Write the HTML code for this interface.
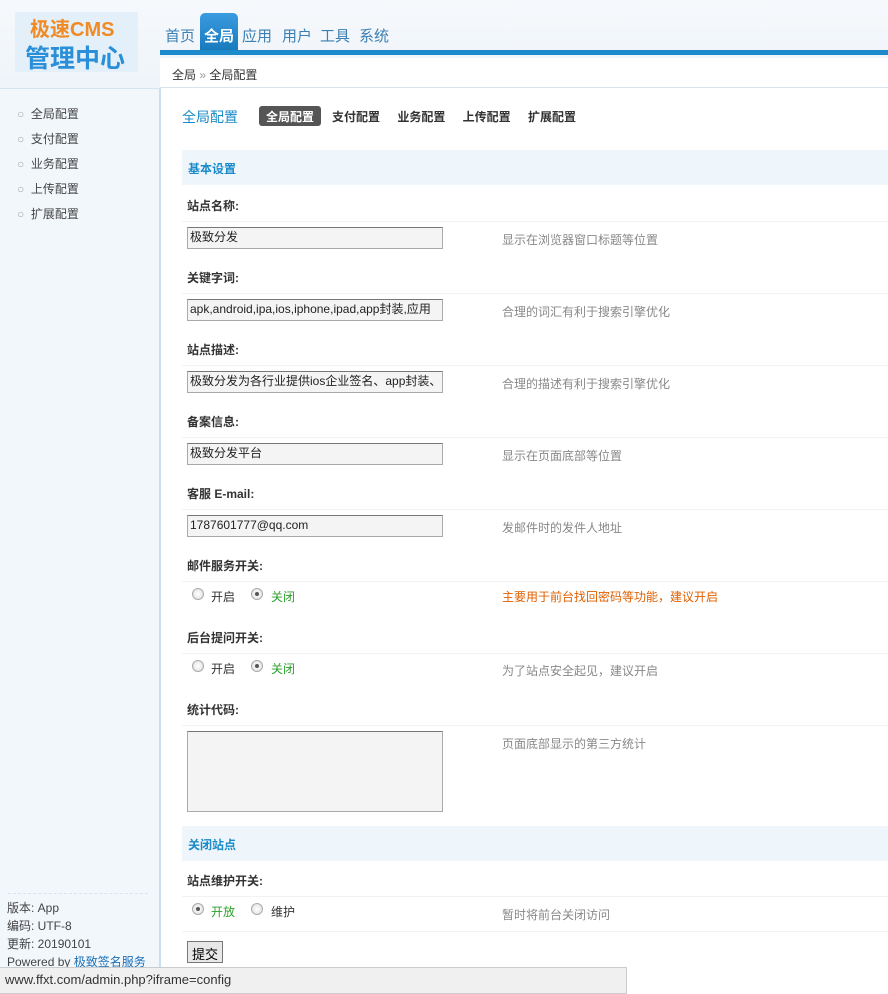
<!DOCTYPE html><html><head><meta charset="utf-8"><style>
*{margin:0;padding:0;box-sizing:border-box}
body{width:888px;height:994px;overflow:hidden;background:#fff;font-family:"Liberation Sans","Noto Sans CJK SC",sans-serif;font-size:12px;color:#333;position:relative}
.a{position:absolute;white-space:nowrap}
.lbl{font-weight:bold;font-size:12px;color:#333}
.hint{color:#888;font-size:12px}
.inp{position:absolute;left:187px;width:256px;height:22px;border:1px solid #aaa;border-top-color:#777;background:#f4f4f4;font-size:12px;line-height:14px;padding:2px 2px;overflow:hidden;white-space:nowrap;color:#222}
.line{position:absolute;left:182px;right:0;height:1px;background:#f0f2f4}
.rad{position:absolute;width:12px;height:12px;border-radius:50%;border:1px solid #aaa;background:radial-gradient(#fff,#ddd)}
.rad.on::after{content:"";position:absolute;left:3px;top:3px;width:4px;height:4px;border-radius:50%;background:#555}
.sec{position:absolute;left:182px;right:0;height:35px;background:#eef5fb;color:#1a8bc8;font-weight:bold;padding:10px 6px;font-size:12px}
.nv{position:absolute;top:25px;font-size:15px;color:#3b7fb3}
</style></head><body>
<div class="a" style="left:0;top:0;width:888px;height:88px;background:linear-gradient(#f6f9fc,#eef4f9)"></div>
<div class="a" style="left:15px;top:12px;width:123px;height:60px;background:#e4f0f9"></div>
<div class="a" style="left:30px;top:13px;font-size:20px;font-weight:bold;color:#f08a24">极速CMS</div>
<div class="a" style="left:25px;top:39px;font-size:25px;font-weight:bold;color:#2a8fd8">管理中心</div>
<div class="a" style="left:200px;top:13px;width:38px;height:40px;background:linear-gradient(#3a9be0,#1677bb);border-radius:5px 5px 0 0"></div>
<div class="nv" style="left:165px">首页</div>
<div class="nv" style="left:204px;color:#fff;font-weight:bold">全局</div>
<div class="nv" style="left:242px">应用</div>
<div class="nv" style="left:282px">用户</div>
<div class="nv" style="left:320px">工具</div>
<div class="nv" style="left:359px">系统</div>
<div class="a" style="left:160px;top:50px;width:728px;height:5px;background:#1d8acb"></div>
<div class="a" style="left:160px;top:58px;width:728px;height:30px;background:#fff;border-bottom:1px solid #d6e4ef"></div>
<div class="a" style="left:172px;top:66px;font-size:12px;color:#333">全局 <span style="color:#999">»</span> 全局配置</div>
<div class="a" style="left:0;top:88px;width:161px;height:906px;background:#f2f7fc;border-right:2px solid #c9dfef;border-top:1px solid #d6e4ef"></div>
<div class="a" style="left:17px;top:102px;line-height:25px;font-size:12px;color:#444">
<div><span style="color:#aaa">○</span>&nbsp; 全局配置</div><div><span style="color:#aaa">○</span>&nbsp; 支付配置</div><div><span style="color:#aaa">○</span>&nbsp; 业务配置</div><div><span style="color:#aaa">○</span>&nbsp; 上传配置</div><div><span style="color:#aaa">○</span>&nbsp; 扩展配置</div></div>
<div class="a" style="left:8px;top:893px;width:140px;border-top:1px dashed #d6e4ef"></div>
<div class="a" style="left:7px;top:899px;line-height:18px;font-size:12px;color:#444">版本: App<br>编码: UTF-8<br>更新: 20190101<br>Powered by <span style="color:#1a6fb5">极致签名服务</span></div>
<div class="a" style="left:182px;top:107px;font-size:14px;color:#1a8bc8">全局配置</div>
<div class="a" style="left:259px;top:106px;width:62px;height:20px;background:#555;border-radius:3px"></div>
<div class="a" style="left:266px;top:108px;font-size:12px;font-weight:bold;color:#fff">全局配置</div>
<div class="a" style="left:332px;top:108px;font-size:12px;font-weight:bold;color:#333;word-spacing:14px">支付配置 业务配置 上传配置 扩展配置</div>
<div class="sec" style="top:150px">基本设置</div>

<div class="a lbl" style="left:187px;top:197px">站点名称:</div><div class="line" style="top:221px"></div>
<div class="inp" style="top:227px">极致分发</div><div class="a hint" style="left:502px;top:231px">显示在浏览器窗口标题等位置</div>
<div class="a lbl" style="left:187px;top:269px">关键字词:</div><div class="line" style="top:293px"></div>
<div class="inp" style="top:299px">apk,android,ipa,ios,iphone,ipad,app封装,应用</div><div class="a hint" style="left:502px;top:303px">合理的词汇有利于搜索引擎优化</div>
<div class="a lbl" style="left:187px;top:341px">站点描述:</div><div class="line" style="top:365px"></div>
<div class="inp" style="top:371px">极致分发为各行业提供ios企业签名、app封装、</div><div class="a hint" style="left:502px;top:375px">合理的描述有利于搜索引擎优化</div>
<div class="a lbl" style="left:187px;top:413px">备案信息:</div><div class="line" style="top:437px"></div>
<div class="inp" style="top:443px">极致分发平台</div><div class="a hint" style="left:502px;top:447px">显示在页面底部等位置</div>
<div class="a lbl" style="left:187px;top:485px">客服 E-mail:</div><div class="line" style="top:509px"></div>
<div class="inp" style="top:515px">1787601777@qq.com</div><div class="a hint" style="left:502px;top:519px">发邮件时的发件人地址</div>
<div class="a lbl" style="left:187px;top:557px">邮件服务开关:</div><div class="line" style="top:581px"></div>
<div class="rad" style="left:192px;top:588px"></div><div class="a" style="left:211px;top:588px">开启</div>
<div class="rad on" style="left:251px;top:588px"></div><div class="a" style="left:271px;top:588px;color:#2aa02a">关闭</div>
<div class="a" style="left:502px;top:588px;color:#e06000">主要用于前台找回密码等功能，建议开启</div>
<div class="a lbl" style="left:187px;top:629px">后台提问开关:</div><div class="line" style="top:653px"></div>
<div class="rad" style="left:192px;top:660px"></div><div class="a" style="left:211px;top:660px">开启</div>
<div class="rad on" style="left:251px;top:660px"></div><div class="a" style="left:271px;top:660px;color:#2aa02a">关闭</div>
<div class="a hint" style="left:502px;top:662px">为了站点安全起见，建议开启</div>
<div class="a lbl" style="left:187px;top:701px">统计代码:</div><div class="line" style="top:725px"></div>
<div class="inp" style="top:731px;height:81px"></div><div class="a hint" style="left:502px;top:735px">页面底部显示的第三方统计</div>
<div class="sec" style="top:826px">关闭站点</div>
<div class="a lbl" style="left:187px;top:872px">站点维护开关:</div><div class="line" style="top:896px"></div>
<div class="rad on" style="left:192px;top:903px"></div><div class="a" style="left:211px;top:903px;color:#2aa02a">开放</div>
<div class="rad" style="left:251px;top:903px"></div><div class="a" style="left:271px;top:903px">维护</div>
<div class="a hint" style="left:502px;top:906px">暂时将前台关闭访问</div>
<div class="line" style="top:931px"></div>
<div class="a" style="left:187px;top:941px;width:36px;height:22px;background:#e8e8e8;border:1px solid #777;font-size:13px;padding:2px 4px;color:#000">提交</div>
<div class="a" style="left:0;top:967px;width:627px;height:27px;background:#f0f0f0;border:1px solid #ccc;border-left:none"></div>
<div class="a" style="left:5px;top:972px;font-size:13px;color:#333">www.ffxt.com/admin.php?iframe=config</div>
</body></html>
